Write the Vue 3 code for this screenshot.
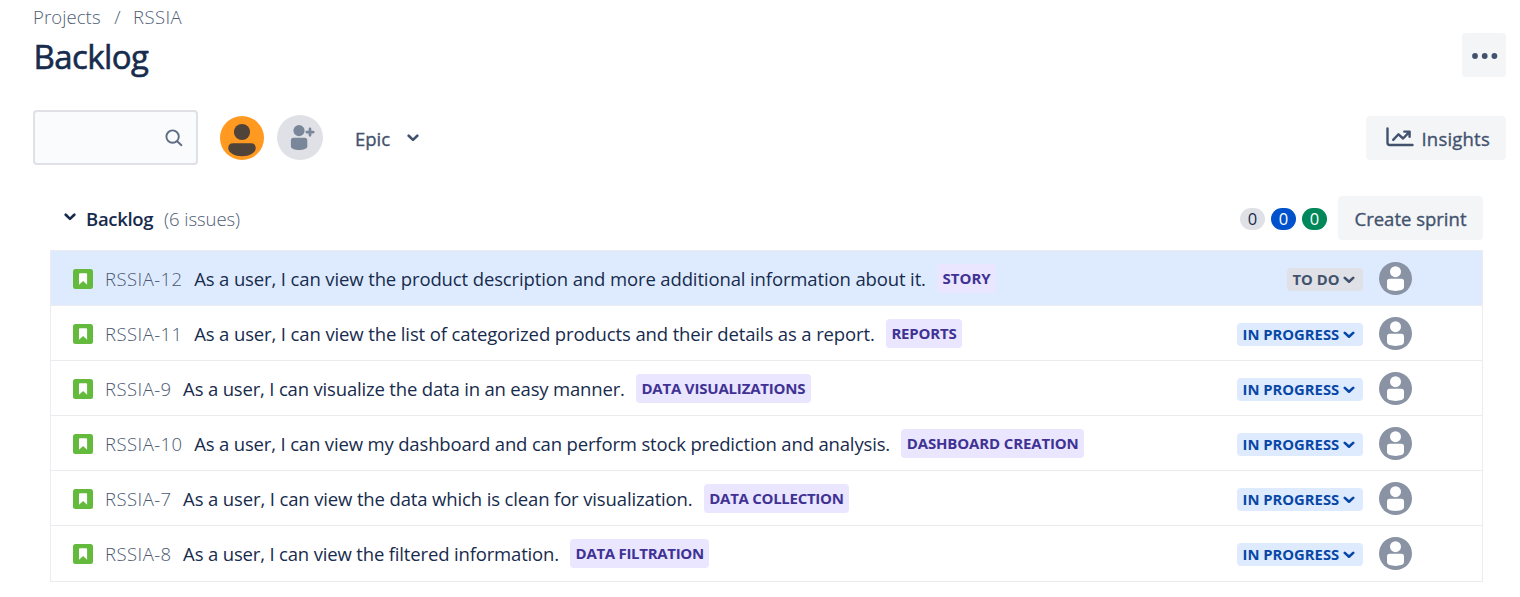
<script setup>
// tracking / epicTracking: letter spacing in px for the summary and the epic label
const issues = [
  { key: 'RSSIA-12', summary: 'As a user, I can view the product description and more additional information about it.', tracking: -0.126, epic: 'STORY', epicTracking: 0, status: 'TO DO', todo: true },
  { key: 'RSSIA-11', summary: 'As a user, I can view the list of categorized products and their details as a report.', tracking: -0.125, epic: 'REPORTS', epicTracking: -0.17, status: 'IN PROGRESS' },
  { key: 'RSSIA-9', summary: 'As a user, I can visualize the data in an easy manner.', tracking: -0.175, epic: 'DATA VISUALIZATIONS', epicTracking: -0.19, status: 'IN PROGRESS' },
  { key: 'RSSIA-10', summary: 'As a user, I can view my dashboard and can perform stock prediction and analysis.', tracking: -0.158, epic: 'DASHBOARD CREATION', epicTracking: -0.14, status: 'IN PROGRESS' },
  { key: 'RSSIA-7', summary: 'As a user, I can view the data which is clean for visualization.', tracking: -0.137, epic: 'DATA COLLECTION', epicTracking: -0.28, status: 'IN PROGRESS' },
  { key: 'RSSIA-8', summary: 'As a user, I can view the filtered information.', tracking: -0.164, epic: 'DATA FILTRATION', epicTracking: -0.3, status: 'IN PROGRESS' },
]
</script>

<template>
  <main class="page">
    <nav class="crumbs"><span>Projects</span><span class="slash">/</span><span class="project">RSSIA</span></nav>
    <header class="head">
      <h1>Backlog</h1>
      <button class="more" aria-label="More">
        <svg width="26" height="6" viewBox="0 0 26 6" fill="#42526e"><circle cx="3" cy="3" r="2.9" /><circle cx="12.7" cy="3" r="2.9" /><circle cx="22.4" cy="3" r="2.9" /></svg>
      </button>
    </header>

    <section class="tools">
      <div class="search">
        <svg width="18" height="18" viewBox="0 0 18 18" fill="none" stroke="#5e6c84" stroke-width="1.9" stroke-linecap="round"><circle cx="7.6" cy="7.6" r="6.2" /><path d="M12.2 12.2L16.4 16.2" /></svg>
      </div>
      <svg class="me" width="44" height="44" viewBox="0 0 44 44"><circle cx="22" cy="22" r="22" fill="#ff991f" /><g fill="#50433a"><circle cx="22" cy="16" r="8.1" /><path d="M13 27.300h18q4.700 0 4.700 5c0 4.500-6.700 8-13.700 8s-13.700-3.500-13.700-8q0-5 4.700-5z" /></g></svg>
      <svg class="add" width="46" height="46" viewBox="0 0 46 46"><ellipse cx="23" cy="22.500" rx="23" ry="22.500" fill="#dfe1e6" /><g fill="#7a869a"><circle cx="22" cy="15.600" r="5.600" /><path d="M16.600 22.700h11q2.700 0 2.700 2.700v5.800c0 2.500-4 3.800-8.200 3.800s-8.200-1.300-8.200-3.800v-5.800q0-2.700 2.700-2.700z" /></g><path d="M33 13.900v6.400M29.800 17.100h6.400" stroke="#7a869a" stroke-width="2.700" stroke-linecap="round" /></svg>
      <span class="epic-filter">Epic</span>
      <svg class="epic-chevron" width="12" height="8" viewBox="0 0 12 8" fill="none" stroke="#42526e" stroke-width="2.600" stroke-linecap="round" stroke-linejoin="round"><path d="M1.700 1.700L6 5.900l4.300-4.200" /></svg>
      <button class="btn insights">
        <svg width="28" height="20" viewBox="0 0 28 20" fill="none" stroke="#42526e" stroke-width="2.400" stroke-linecap="round" stroke-linejoin="round"><path d="M1.500 1.500v14.300q0 2.200 2.200 2.200h22.800" /><path d="M7.200 12.900l5.300-5.600 4.600 4.200 6.300-6.600M18.300 4.600h5.300v5.200" /></svg>
        <span>Insights</span>
      </button>
    </section>

    <section class="section-head">
      <svg class="toggle" width="12" height="8" viewBox="0 0 12 8" fill="none" stroke="#172b4d" stroke-width="2.600" stroke-linecap="round" stroke-linejoin="round"><path d="M1.700 1.700L6 5.900l4.300-4.200" /></svg>
      <h2>Backlog</h2>
      <span class="count">(6 issues)</span>
      <div class="badges"><span class="gray">0</span><span class="blue">0</span><span class="green">0</span></div>
      <button class="btn create"><span>Create sprint</span></button>
    </section>

    <div class="list">
      <div v-for="issue in issues" :key="issue.key" class="row" :class="{ selected: issue.todo }">
        <svg class="type" width="20" height="20" viewBox="0 0 20 20"><rect width="20" height="20" rx="2.500" fill="#63ba3c" /><path d="M6.900 4.200h6.300q.9 0 .9.900v10.700l-4-3.800-4.100 3.800V5.100q0-.9.900-.9z" fill="#fff" /></svg>
        <span class="key">{{ issue.key }}</span>
        <span class="summary" :style="{ letterSpacing: issue.tracking + 'px' }">{{ issue.summary }}</span>
        <span class="tag" :style="{ letterSpacing: issue.epicTracking + 'px' }">{{ issue.epic }}</span>
        <span class="status" :class="{ todo: issue.todo }">
          <span>{{ issue.status }}</span>
          <svg width="12" height="8" viewBox="0 0 12 8" fill="none" stroke="currentColor" stroke-width="2.600" stroke-linecap="round" stroke-linejoin="round"><path d="M1.800 1.900L6 5.700l4.200-3.800" /></svg>
        </span>
        <svg class="assignee" width="33" height="33" viewBox="0 0 33 33"><circle cx="16.500" cy="16.500" r="16.500" fill="#8993a4" /><g fill="#fff"><circle cx="16.500" cy="9.700" r="5.500" /><path d="M10.700 16.700h11.600q2.700 0 2.700 2.700v5.700c0 2.700-4 3.800-8.500 3.800S8 27.800 8 25.100v-5.700q0-2.700 2.700-2.700z" /></g></svg>
      </div>
    </div>
  </main>
</template>

<style>
body { background: #fff; }
</style>

<style scoped>
.page { width: 1520px; height: 597px; box-sizing: border-box; padding: 4px 14px 0 33px; overflow: hidden; font-family: "Open Sans", "Noto Sans", sans-serif; color: #172b4d; white-space: nowrap; }
.page svg { flex: none; display: block; }
button { border: 0; padding: 0; font: inherit; color: inherit; }
h1, h2 { margin: 0; }
.crumbs { display: flex; height: 26px; line-height: 26px; font-size: 18.500px; font-weight: 300; letter-spacing: 0.1px; color: #4f5d75; }
.slash { margin: 0 12.500px 0 13.500px; }
.project { letter-spacing: 0.4px; }
.head { display: flex; justify-content: space-between; height: 47px; }
h1 { font-size: 33px; line-height: 54px; font-weight: 400; letter-spacing: -0.6px; -webkit-text-stroke: 0.6px currentColor; padding-left: 0.500px; }
.more { width: 44px; height: 44px; margin-top: 3px; border-radius: 4px; background: #f4f5f7; display: flex; align-items: center; justify-content: center; padding: 1px 0 0 1px; box-sizing: border-box; }
.tools { display: flex; align-items: center; height: 55px; margin-top: 33px; }
.search { width: 165px; height: 55px; box-sizing: border-box; border: 2px solid #dfe1e6; border-radius: 4px; background: #fafbfc; display: flex; align-items: center; justify-content: flex-end; padding-right: 13px; }
.me { margin-left: 22px; }
.add { margin-left: 13px; }
.epic-filter { margin: 1px 0 0 32px; width: 36px; font-size: 18.500px; color: #42526e; -webkit-text-stroke: 0.35px currentColor; }
.epic-chevron { margin: 1px 0 0 15.500px; }
.btn { height: 44px; border-radius: 4px; background: #f4f5f7; color: #42526e; font-size: 18.500px; display: flex; align-items: center; -webkit-text-stroke: 0.35px currentColor; }
.insights { width: 140px; margin-left: auto; padding: 2px 0 0 19.500px; box-sizing: border-box; letter-spacing: 0.2px; }
.insights svg { margin: -3px 8px 0 0; }
.section-head { display: flex; align-items: center; height: 44px; margin: 31px 23px 0 31px; }
.toggle { margin: -3px 0 0 -0.500px; }
h2 { margin: 0 0 0 10.500px; width: 78px; font-size: 18.500px; font-weight: 600; letter-spacing: -0.3px; }
.count { font-size: 18.500px; font-weight: 300; letter-spacing: -0.05px; color: #4f5d75; }
.badges { display: flex; gap: 6px; margin: 2px 0 0 auto; }
.badges span { width: 25px; height: 22px; border-radius: 11px; font-size: 16.500px; line-height: 22px; text-align: center; }
.gray { background: #dfe1e6; }
.blue { background: #0052cc; color: #fff; }
.green { background: #00875a; color: #fff; }
.create { width: 145px; margin-left: 11px; box-sizing: border-box; justify-content: center; }
.list { margin: 10px 23px 0 17px; border: 1px solid #ebecf0; }
.row { height: 55px; box-sizing: border-box; display: flex; align-items: center; padding: 0 70px 0 22px; border-bottom: 1px solid #ebecf0; font-size: 18.500px; }
.row:last-child { border-bottom: 0; padding-bottom: 1px; }
.selected { background: #deebff; }
.type { margin-top: 2px; }
.key { margin: 0 0 0 12px; color: #4a5870; font-weight: 300; letter-spacing: 0.45px; }
.summary { margin: 0 0 0 11.500px; }
.tag { margin-left: 11.200px; padding: 0 5.500px; border-radius: 4px; background: #eae6ff; color: #403294; font-size: 15px; font-weight: 700; line-height: 29px; }
.status { width: 126px; height: 23px; margin: 2px 0 0 auto; box-sizing: border-box; padding: 0 8px 0 5.500px; border-radius: 4px; background: #deebff; color: #0747a6; font-size: 14.800px; font-weight: 700; line-height: 23px; display: flex; align-items: center; justify-content: space-between; }
.status svg { margin-top: 2px; }
.status.todo { width: 76px; background: #dfe1e6; color: #42526e; }
.assignee { margin-left: 16px; }
</style>
